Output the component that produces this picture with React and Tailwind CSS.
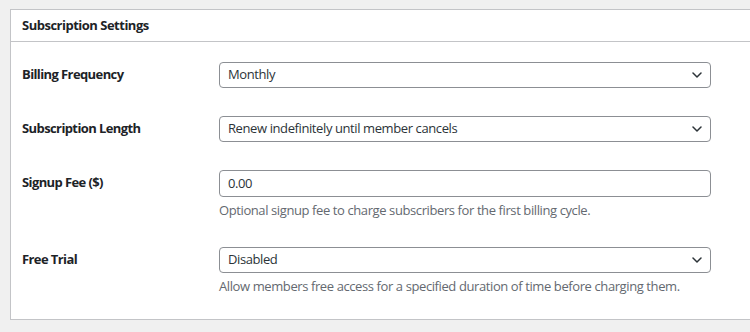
import React from 'react';

const Chevron = () => (
  <svg width="10" height="6" viewBox="0 0 10 6" fill="none" className="shrink-0">
    <path d="M1 1l4 4 4-4" stroke="#2c3338" strokeWidth="1.5" strokeLinecap="round" strokeLinejoin="round" />
  </svg>
);

const Select = ({ value }) => (
  <div className="w-[492px] h-[26px] flex items-center justify-between border border-[#8c8f94] rounded-[4px] bg-white pl-[8px] pr-[8px] text-[13px] tracking-[-0.4px] text-[#2c3338]">
    <span>{value}</span>
    <Chevron />
  </div>
);

const Input = ({ value }) => (
  <div className="w-[492px] h-[27px] flex items-center border border-[#8c8f94] rounded-[4px] bg-white px-[8px] text-[13px] tracking-[-0.4px] text-[#2c3338]">
    {value}
  </div>
);

const Row = ({ label, help, children }) => (
  <div className="flex py-[14px]">
    <div className="w-[197px] h-[26px] flex items-center text-[13px] font-bold tracking-[-0.6px] text-[#1d2327]">{label}</div>
    <div>
      {children}
      {help && <p className="mt-[4px] leading-[18px] text-[13px] tracking-[-0.4px] text-[#646970]">{help}</p>}
    </div>
  </div>
);

export default function App() {
  const rows = [
    { label: "Billing Frequency", control: <Select value="Monthly" /> },
    { label: "Subscription Length", control: <Select value="Renew indefinitely until member cancels" /> },
    {
      label: "Signup Fee ($)",
      control: <Input value="0.00" />,
      help: "Optional signup fee to charge subscribers for the first billing cycle.",
    },
    {
      label: "Free Trial",
      control: <Select value="Disabled" />,
      help: "Allow members free access for a specified duration of time before charging them.",
    },
  ];

  return (
    <div className="w-[750px] h-[332px] overflow-hidden bg-[#f0f0f0] pt-[9px] pl-[10px]" style={{ fontFamily: '"Open Sans", sans-serif' }}>
      <div className="w-[760px] bg-white border border-[#c3c4c7]">
        <div className="h-[32px] flex items-center pt-[1px] px-[11px] border-b border-[#c3c4c7] text-[13px] font-bold tracking-[-0.5px] text-[#1d2327]">
          Subscription Settings
        </div>
        <div className="pt-[6px] pb-[10px] pl-[11px]">
          {rows.map((r) => (
            <Row key={r.label} label={r.label} help={r.help}>
              {r.control}
            </Row>
          ))}
        </div>
      </div>
    </div>
  );
}
